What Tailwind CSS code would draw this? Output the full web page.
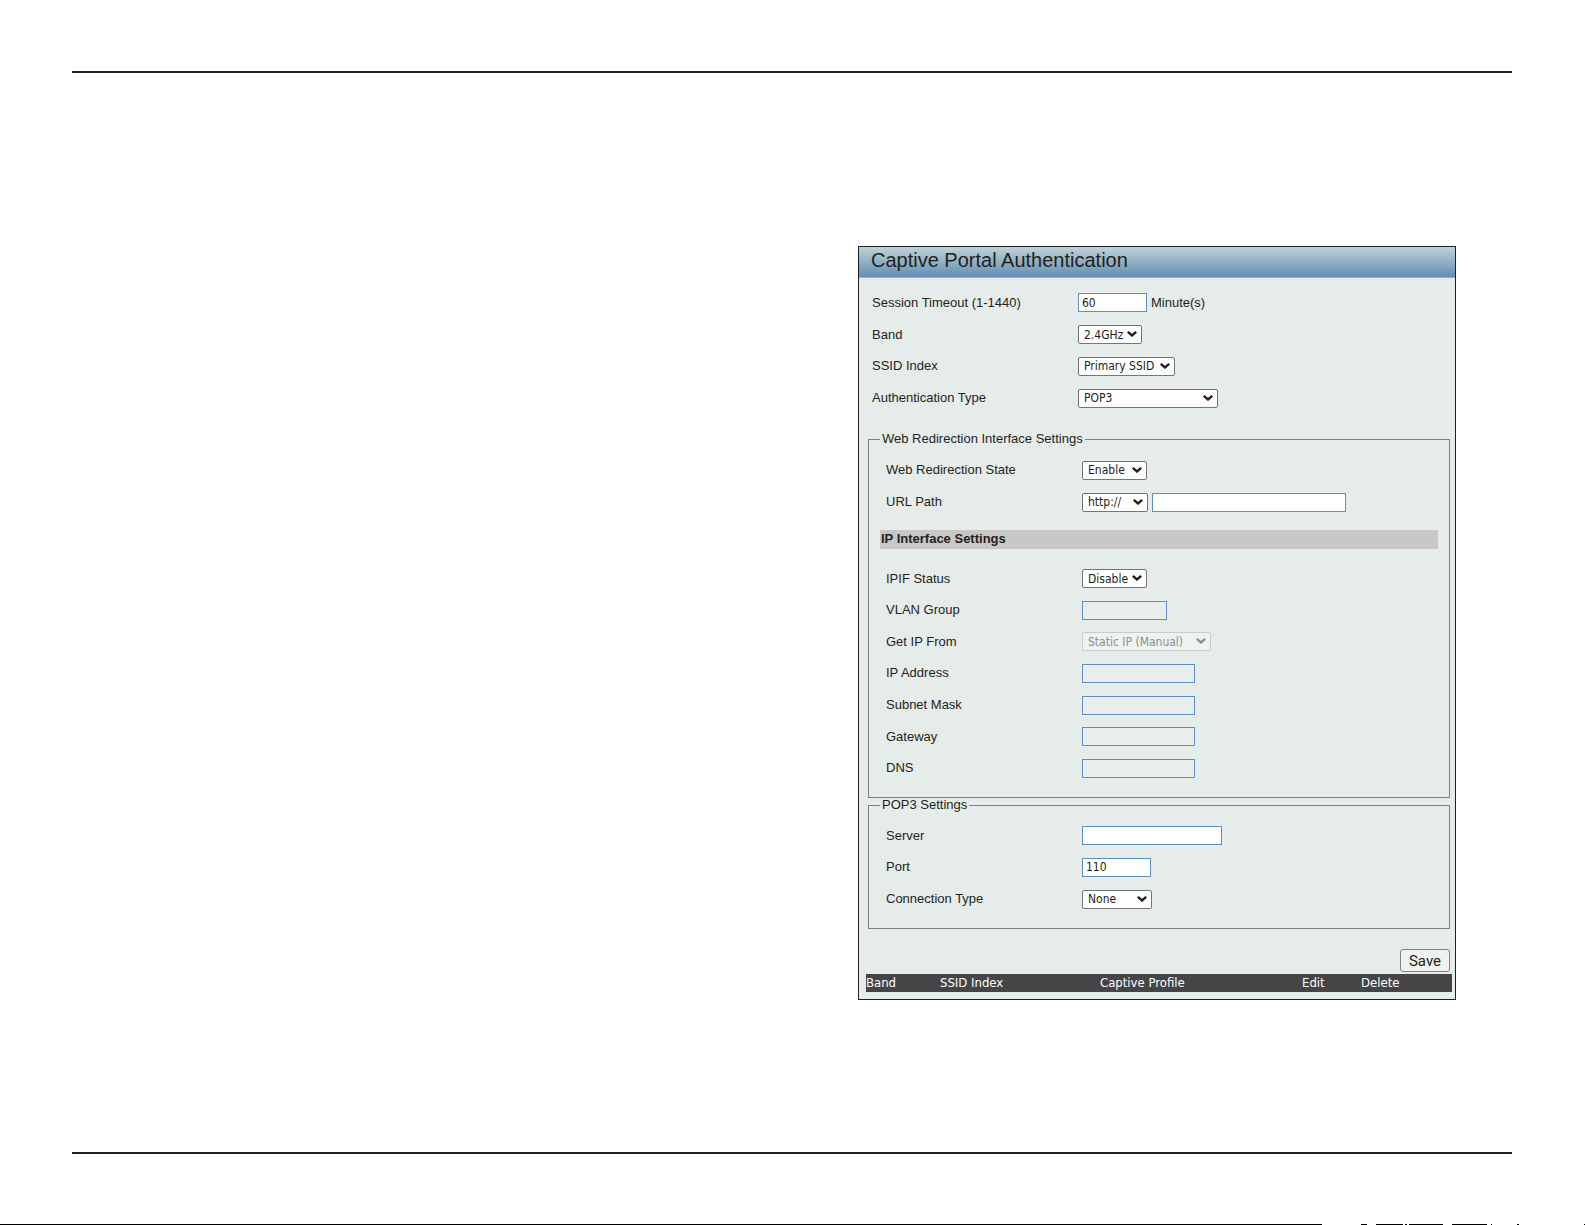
<!DOCTYPE html>
<html lang="en">
<head>
    <meta charset="UTF-8">
    <meta name="viewport" content="width=device-width, initial-scale=1.0">
    <title>Captive Portal Authentication</title>
    <script src="https://cdn.jsdelivr.net/npm/@tailwindcss/browser@4"></script>
</head>
<body class="bg-white text-[#231f20] text-[13px] leading-5 font-['Liberation_Sans',Arial,sans-serif] min-h-screen flex flex-col">
    <!-- Shared select arrow -->
    <svg class="hidden">
        <symbol id="chevron" viewBox="0 0 10 6">
            <path d="M0.8 0.9 L5 4.5 L9.2 0.9" fill="none" stroke="currentColor" stroke-width="2.4"/>
        </symbol>
    </svg>

    <div class="flex-1 flex flex-col pl-[72px] pr-[73px] pt-[71px] pb-[70px]">
        <hr class="border-0 h-[2px] bg-[#231f20]">

        <main class="flex-1 w-1/2 ml-auto pt-[173px] pr-[56px] flex flex-col items-end">
            <section class="w-full max-w-[598px] bg-[#e6ecea] border border-[#231f20]">
                <h1 class="h-[31px] pl-3 text-[20px] leading-[27px] bg-linear-to-b from-[#bdd3d6] to-[#638fb2] border-b border-[#8fb1cb]">Captive Portal Authentication</h1>

                <form>
                    <!-- General -->
                    <div class="mt-[9px] pl-[13px] min-h-[127px] grid auto-rows-fr">
                        <div class="flex items-center">
                            <label for="timeout" class="w-[206px]">Session Timeout (1-1440)</label>
                            <input id="timeout" type="text" value="60" class="w-[69px] h-[19px] mr-1 px-[3px] bg-white border border-[#5c8fc6] text-[12px] font-['DejaVu_Sans_Condensed','DejaVu_Sans',sans-serif]">
                            <span>Minute(s)</span>
                        </div>
                        <div class="flex items-center">
                            <label for="band" class="w-[206px]">Band</label>
                            <div class="relative">
                                <select id="band" class="block appearance-none w-[64px] h-[19px] pl-[5px] bg-white border border-[#767676] rounded-[2px] text-[12px] leading-4 font-['DejaVu_Sans_Condensed','DejaVu_Sans',sans-serif]">
                                    <option>2.4GHz</option>
                                    <option>5GHz</option>
                                </select>
                                <svg class="absolute right-[5px] top-[6px] w-[10px] h-[6px] pointer-events-none"><use href="#chevron"/></svg>
                            </div>
                        </div>
                        <div class="flex items-center">
                            <label for="ssid" class="w-[206px]">SSID Index</label>
                            <div class="relative">
                                <select id="ssid" class="block appearance-none w-[97px] h-[19px] pl-[5px] bg-white border border-[#767676] rounded-[2px] text-[12px] leading-4 font-['DejaVu_Sans_Condensed','DejaVu_Sans',sans-serif]">
                                    <option>Primary SSID</option>
                                </select>
                                <svg class="absolute right-[5px] top-[6px] w-[10px] h-[6px] pointer-events-none"><use href="#chevron"/></svg>
                            </div>
                        </div>
                        <div class="flex items-center">
                            <label for="auth" class="w-[206px]">Authentication Type</label>
                            <div class="relative">
                                <select id="auth" class="block appearance-none w-[140px] h-[19px] pl-[5px] bg-white border border-[#767676] rounded-[2px] text-[12px] leading-4 font-['DejaVu_Sans_Condensed','DejaVu_Sans',sans-serif]">
                                    <option>POP3</option>
                                </select>
                                <svg class="absolute right-[5px] top-[6px] w-[10px] h-[6px] pointer-events-none"><use href="#chevron"/></svg>
                            </div>
                        </div>
                    </div>

                    <!-- Web redirection -->
                    <fieldset class="mt-[15px] ml-[9px] mr-[5px] px-[11px] pb-[13px] border border-[#808080]">
                        <legend class="px-[2px]">Web Redirection Interface Settings</legend>
                        <div class="mt-[5px] pl-[6px] min-h-[64px] grid auto-rows-fr">
                            <div class="flex items-center">
                                <label for="redirect" class="w-[196px]">Web Redirection State</label>
                                <div class="relative">
                                    <select id="redirect" class="block appearance-none w-[65px] h-[19px] pl-[5px] bg-white border border-[#767676] rounded-[2px] text-[12px] leading-4 font-['DejaVu_Sans_Condensed','DejaVu_Sans',sans-serif]">
                                        <option>Enable</option>
                                        <option>Disable</option>
                                    </select>
                                    <svg class="absolute right-[5px] top-[6px] w-[10px] h-[6px] pointer-events-none"><use href="#chevron"/></svg>
                                </div>
                            </div>
                            <div class="flex items-center">
                                <label for="url" class="w-[196px]">URL Path</label>
                                <div class="relative mr-1">
                                    <select aria-label="URL scheme" class="block appearance-none w-[66px] h-[19px] pl-[5px] bg-white border border-[#767676] rounded-[2px] text-[12px] leading-4 font-['DejaVu_Sans_Condensed','DejaVu_Sans',sans-serif]">
                                        <option>http://</option>
                                        <option>https://</option>
                                    </select>
                                    <svg class="absolute right-[5px] top-[6px] w-[10px] h-[6px] pointer-events-none"><use href="#chevron"/></svg>
                                </div>
                                <input id="url" type="text" class="w-[194px] h-[19px] px-[3px] bg-white border border-[#5c8fc6] text-[12px] font-['DejaVu_Sans_Condensed','DejaVu_Sans',sans-serif]">
                            </div>
                        </div>

                        <h2 class="mt-3 h-[19px] pl-px leading-[18px] font-bold bg-[#cac8c6]">IP Interface Settings</h2>

                        <div class="mt-[14px] pl-[6px] min-h-[221px] grid auto-rows-fr">
                            <div class="flex items-center">
                                <label for="ipif" class="w-[196px]">IPIF Status</label>
                                <div class="relative">
                                    <select id="ipif" class="block appearance-none w-[65px] h-[19px] pl-[5px] bg-white border border-[#767676] rounded-[2px] text-[12px] leading-4 font-['DejaVu_Sans_Condensed','DejaVu_Sans',sans-serif]">
                                        <option>Disable</option>
                                        <option>Enable</option>
                                    </select>
                                    <svg class="absolute right-[5px] top-[6px] w-[10px] h-[6px] pointer-events-none"><use href="#chevron"/></svg>
                                </div>
                            </div>
                            <div class="flex items-center">
                                <label for="vlan" class="w-[196px]">VLAN Group</label>
                                <input id="vlan" type="text" disabled class="w-[85px] h-[19px] bg-[#e9edec] border border-[#5c8fc6]">
                            </div>
                            <div class="flex items-center">
                                <label for="getip" class="w-[196px]">Get IP From</label>
                                <div class="relative text-[#8d908f]">
                                    <select id="getip" disabled class="block appearance-none w-[129px] h-[19px] pl-[5px] bg-[#eff2f1] border border-[#c8cccb] rounded-[2px] text-[12px] leading-4 opacity-100 font-['DejaVu_Sans_Condensed','DejaVu_Sans',sans-serif]">
                                        <option>Static IP (Manual)</option>
                                    </select>
                                    <svg class="absolute right-[5px] top-[6px] w-[10px] h-[6px] pointer-events-none"><use href="#chevron"/></svg>
                                </div>
                            </div>
                            <div class="flex items-center">
                                <label for="ip" class="w-[196px]">IP Address</label>
                                <input id="ip" type="text" disabled class="w-[113px] h-[19px] bg-[#e9edec] border border-[#5c8fc6]">
                            </div>
                            <div class="flex items-center">
                                <label for="mask" class="w-[196px]">Subnet Mask</label>
                                <input id="mask" type="text" disabled class="w-[113px] h-[19px] bg-[#e9edec] border border-[#5c8fc6]">
                            </div>
                            <div class="flex items-center">
                                <label for="gateway" class="w-[196px]">Gateway</label>
                                <input id="gateway" type="text" disabled class="w-[113px] h-[19px] bg-[#e9edec] border border-[#5c8fc6]">
                            </div>
                            <div class="flex items-center">
                                <label for="dns" class="w-[196px]">DNS</label>
                                <input id="dns" type="text" disabled class="w-[113px] h-[19px] bg-[#e9edec] border border-[#5c8fc6]">
                            </div>
                        </div>
                    </fieldset>

                    <!-- POP3 -->
                    <fieldset class="-mt-[3px] ml-[9px] mr-[5px] px-[11px] pb-[13px] border border-[#808080]">
                        <legend class="px-[2px]">POP3 Settings</legend>
                        <div class="mt-[5px] pl-[6px] min-h-[95px] grid auto-rows-fr">
                            <div class="flex items-center">
                                <label for="server" class="w-[196px]">Server</label>
                                <input id="server" type="text" class="w-[140px] h-[19px] px-[3px] bg-white border border-[#5c8fc6] text-[12px] font-['DejaVu_Sans_Condensed','DejaVu_Sans',sans-serif]">
                            </div>
                            <div class="flex items-center">
                                <label for="port" class="w-[196px]">Port</label>
                                <input id="port" type="text" value="110" class="w-[69px] h-[19px] px-[3px] bg-white border border-[#5c8fc6] text-[12px] font-['DejaVu_Sans_Condensed','DejaVu_Sans',sans-serif]">
                            </div>
                            <div class="flex items-center">
                                <label for="connection" class="w-[196px]">Connection Type</label>
                                <div class="relative">
                                    <select id="connection" class="block appearance-none w-[70px] h-[19px] pl-[5px] bg-white border border-[#767676] rounded-[2px] text-[12px] leading-4 font-['DejaVu_Sans_Condensed','DejaVu_Sans',sans-serif]">
                                        <option>None</option>
                                    </select>
                                    <svg class="absolute right-[5px] top-[6px] w-[10px] h-[6px] pointer-events-none"><use href="#chevron"/></svg>
                                </div>
                            </div>
                        </div>
                    </fieldset>

                    <div class="mt-5 mr-[5px] flex justify-end">
                        <button type="submit" class="w-[50px] h-[23px] bg-[#f1f1ef] border border-[#808080] rounded-[3px] text-[15px] leading-5 font-['Roboto',sans-serif]">Save</button>
                    </div>
                </form>

                <!-- Profile list -->
                <div class="mt-[2px] mb-[7px] ml-[7px] mr-[3px]">
                    <table class="w-full table-fixed bg-[#454547] text-white text-[13px] leading-[18px] font-['DejaVu_Sans_Condensed','DejaVu_Sans',sans-serif]">
                        <thead>
                            <tr class="text-left">
                                <th class="w-[74px] p-0 font-normal">Band</th>
                                <th class="w-[160px] p-0 font-normal">SSID Index</th>
                                <th class="p-0 font-normal">Captive Profile</th>
                                <th class="w-[59px] p-0 font-normal">Edit</th>
                                <th class="w-[91px] p-0 font-normal">Delete</th>
                            </tr>
                        </thead>
                    </table>
                </div>
            </section>
        </main>

        <hr class="border-0 h-[2px] bg-[#231f20]">
    </div>

    <!-- Bottom edge strip -->
    <div class="flex h-px" aria-hidden="true">
        <div class="flex-1 bg-black"></div>
        <svg class="w-[263px] h-px" viewBox="0 0 263 1">
            <path d="M39 0h6v1h-6z M54 0h27v1h-27z M83 0h2v1h-2z M87 0h34v1h-34z M130 0h35v1h-35z M169 0h1v1h-1z M195 0h2v1h-2z M262 0h1v1h-1z" fill="#000"/>
        </svg>
    </div>
</body>
</html>
